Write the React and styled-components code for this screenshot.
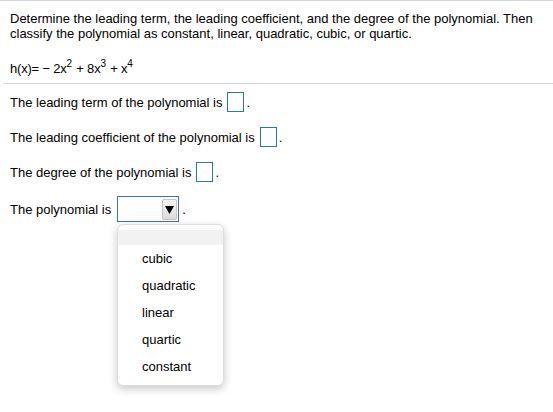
import styled, { createGlobalStyle } from "styled-components";

const Global = createGlobalStyle`
  body {
    margin: 0;
    background: #fff;
    font-family: "Liberation Sans", Arial, sans-serif;
    color: #000;
  }
`

const Page = styled.div`
  border-top: 1px solid #d3d7de;
  width: 553px;
  height: 411px;
  font-size: 13px;
`

const Question = styled.div`
  padding: 10px 10px 0 10px;
  line-height: 15px;
`

const Prompt = styled.p`
  margin: 0;
`

const Formula = styled.div`
  margin-top: 20px;
  height: 15px;
  line-height: 15px;
  letter-spacing: -0.2px;
`

const Sup = styled.sup`
  font-size: 10px;
  line-height: 0;
  vertical-align: 6px;
  margin-right: 1px;
`

const Divider = styled.hr`
  border: none;
  border-top: 1px solid #d3d7de;
  margin: 7px 0 0 3px;
`

const Answers = styled.div`
  padding: 8px 10px 0 10px;
  display: flex;
  flex-direction: column;
  gap: 15px;
`

const Row = styled.div`
  display: flex;
  align-items: center;
  height: ${p => (p.$tall ? "26px" : "20px")};
  margin-top: ${p => (p.$tall ? "-1px" : "0")};
  position: relative;
`

const Blank = styled.span`
  display: inline-block;
  width: 15px;
  height: 18px;
  border: 1px solid #2a7b98;
  margin-left: 5px;
  margin-right: 2px;
`

const SelectBox = styled.div`
  width: 59px;
  height: 24px;
  border: 1px solid #3b6fd0;
  margin-left: 6px;
  margin-right: 3px;
  display: flex;
  justify-content: flex-end;
  align-items: center;
  padding-right: 1px;
`

const Arrow = styled.span`
  width: 13px;
  height: 19px;
  background: linear-gradient(#f4f4f4, #dcdcdc);
  border: 1px solid #c6c6c6;
  border-radius: 2px;
  display: flex;
  align-items: center;
  justify-content: center;
`

const Menu = styled.div`
  position: absolute;
  left: 107px;
  top: 28px;
  width: 105px;
  padding: 5px 0 5px 0;
  background: #fff;
  border: 1px solid #dedede;
  border-radius: 6px;
  box-shadow: 0 3px 9px rgba(0, 0, 0, 0.22);
  z-index: 2;
`

const Option = styled.div`
  height: ${p => (p.$blank ? "15px" : "27px")};
  line-height: 27px;
  padding-left: 24px;
  background: ${p => (p.$blank ? "#f2f2f2" : "transparent")};
`

const options = ["cubic", "quadratic", "linear", "quartic", "constant"];

export default function App() {
  return (
    <Page>
      <Global />
      <Question>
        <Prompt>
          Determine the leading term, the leading coefficient, and the degree of the polynomial. Then
          classify the polynomial as constant, linear, quadratic, cubic, or quartic.
        </Prompt>
        <Formula>
          h(x)= − 2x<Sup>2</Sup> + 8x<Sup>3</Sup> + x<Sup>4</Sup>
        </Formula>
      </Question>
      <Divider />
      <Answers>
        <Row>The leading term of the polynomial is<Blank />.</Row>
        <Row>The leading coefficient of the polynomial is<Blank />.</Row>
        <Row>The degree of the polynomial is<Blank />.</Row>
        <Row $tall>
          The polynomial is
          <SelectBox>
            <Arrow>
              <svg width="9" height="9" viewBox="0 0 9 9">
                <path d="M0 1 L9 1 L4.5 9 Z" fill="#000" />
              </svg>
            </Arrow>
          </SelectBox>
          .
          <Menu>
            <Option $blank />
            {options.map(o => (
              <Option key={o}>{o}</Option>
            ))}
          </Menu>
        </Row>
      </Answers>
    </Page>
  );
}
